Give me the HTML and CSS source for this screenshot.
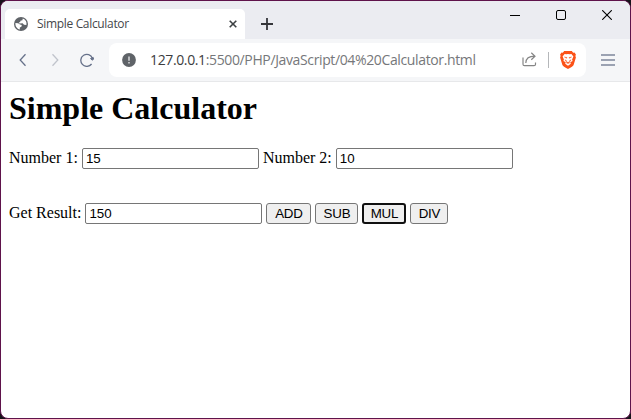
FILE: index.html
```html
<!DOCTYPE html>
<html lang="en">
<head>
<meta charset="utf-8">
<title>Simple Calculator</title>
<link rel="stylesheet" href="styles.css">
</head>
<body>
<div class="window">
  <header class="titlebar">
    <div class="tab">
      <svg class="globe" width="14" height="14" viewBox="0 0 14 14"><circle cx="7" cy="7" r="7" fill="#5f6368"/><path d="M1.4 6 4.2 6.2 6 7.6 7.8 8 7.4 9.8 5.8 10.4 5.8 12.5C3 12 1.2 9.4 1.4 6ZM8.8 1.6 8.4 3.2 6.4 3.8 6.2 5 4.8 5.4 5.4 6.4 8.6 6.2 10 7.8 12.4 8C13 5 11.6 2.4 8.8 1.6Z" fill="#fff"/></svg>
      <span class="tab-title">Simple Calculator</span>
      <svg class="tab-close" width="8" height="8" viewBox="0 0 8 8"><path d="M.7.7 7.3 7.3M7.3.7.7 7.3" stroke="#3c4043" stroke-width="1.6"/></svg>
    </div>
    <svg class="new-tab" width="12" height="12" viewBox="0 0 12 12"><path d="M6 0V12M0 6H12" stroke="#35363a" stroke-width="1.8"/></svg>
    <div class="controls">
      <svg width="10" height="10" viewBox="0 0 10 10"><path d="M0 5.5H10" stroke="#000"/></svg>
      <svg width="10" height="10" viewBox="0 0 10 10"><rect x=".5" y=".5" width="9" height="9" rx="1.5" fill="none" stroke="#000"/></svg>
      <svg width="10" height="10" viewBox="0 0 10 10"><path d="M.2.2 9.8 9.8M9.8.2.2 9.8" stroke="#000" stroke-width="1.1"/></svg>
    </div>
  </header>
  <nav class="toolbar">
    <svg class="back" width="8" height="14" viewBox="0 0 8 14"><path d="M6.5 1.2 1.2 7 6.5 12.8" fill="none" stroke="#66718a" stroke-width="1.3"/></svg>
    <svg class="forward" width="8" height="14" viewBox="0 0 8 14"><path d="M1.5 1.2 6.8 7 1.5 12.8" fill="none" stroke="#c0c4cc" stroke-width="1.3"/></svg>
    <svg class="reload" width="14" height="14" viewBox="0 0 14 14"><path d="M11.6 11A6 6 0 1 1 12.4 5.2" fill="none" stroke="#66718a" stroke-width="1.3"/><path d="M10.6 5.4 13.2 4.4 13.6 6.2 12 7.2Z" fill="#66718a" stroke="#66718a" stroke-linejoin="round"/></svg>
    <div class="address">
      <svg class="info" width="14" height="14" viewBox="0 0 14 14"><circle cx="7" cy="7" r="6.9" fill="#5f6368"/><path d="M7 3.6V7.8M7 8.9V10.4" stroke="#d8dadc" stroke-width="1.5"/></svg>
      <span class="url"><span class="host">127.0.0.1</span>:5500/PHP/JavaScript/04%20Calculator.html</span>
      <svg class="share" width="15" height="15" viewBox="0 0 15 15" fill="none" stroke="#858585" stroke-width="1.2"><path d="M1 5.5V12.2Q1 13.7 2.5 13.7H12Q13.5 13.7 13.5 12.2V10.5M3.8 11Q4 4.2 12.7 4.2M9.3.7 13 4.2 9.3 7.8"/></svg>
      <span class="divider"></span>
      <svg class="shield" width="16" height="18" viewBox="0 0 16 18"><path d="M4.2 0H11.8L13.2 1.7 14.5 1.6 15.9 3.5 15.4 5 15.9 6.4 13.6 14Q13.1 15.3 8 18 2.9 15.3 2.4 14L.1 6.4.6 5 .1 3.5 1.5 1.6 2.8 1.7Z" fill="#fb5218"/><path d="M4.6 3 6.4 3.3 8 2.9 9.6 3.3 11.4 3 13.4 5.6 12.1 8.4 12.6 10 10.3 11.3 10.8 12.8 8 14.8 5.2 12.8 5.7 11.3 3.4 10 3.9 8.4 2.6 5.6Z" fill="#fff"/><path d="M4.4 6 7 6.5 6.7 7.3ZM11.6 6 9 6.5 9.3 7.3ZM5 8.7 7 10.2 6 10.6ZM11 8.7 9 10.2 10 10.6ZM6.2 11.7 8 11 9.8 11.7 8 12.6Z" fill="#fb5218" stroke="#fb5218" stroke-width=".4"/></svg>
    </div>
    <svg class="menu" width="14" height="12" viewBox="0 0 14 12"><path d="M0 1H14M0 6H14M0 11H14" stroke="#7d879b" stroke-width="1.3"/></svg>
  </nav>
  <main class="page">
    <h1>Simple Calculator</h1>
    <div class="row">
      <label for="n1">Number 1:</label><input id="n1" type="text" value="15">
      <label for="n2">Number 2:</label><input id="n2" type="text" value="10">
    </div>
    <div class="row result">
      <label for="res">Get Result:</label><input id="res" type="text" value="150">
      <button class="add">ADD</button><button class="sub">SUB</button><button class="mul active">MUL</button><button class="div">DIV</button>
    </div>
  </main>
</div>
</body>
</html>
```
FILE: styles.css
```css
* { box-sizing: border-box; }
html { background: #17131a; }
body { margin: 0; overflow: hidden; }
svg { display: block; flex: none; }

.window {
  width: 631px;
  height: 419px;
  border: 1px solid #5f134b;
  border-radius: 8px;
  overflow: hidden;
  background: #fff;
}

.titlebar {
  display: flex;
  height: 38px;
  padding: 8px 0 0 4px;
  background: #ebecf1;
}
.tab {
  display: flex;
  align-items: center;
  width: 240px;
  height: 30px;
  padding: 0 8px 0 9px;
  border-radius: 5px 5px 0 0;
  background: #fff;
}
.tab-title {
  flex: 1;
  margin-left: 9px;
  font: 12px/16px "Open Sans", sans-serif;
  letter-spacing: -0.33px;
  color: #45474a;
  white-space: nowrap;
}
.new-tab { margin: 9px 0 0 16px; }
.controls {
  display: flex;
  gap: 36px;
  margin: 1px 18px 0 auto;
}

.toolbar {
  display: flex;
  align-items: center;
  height: 43px;
  padding: 0 15px 1px 18px;
  border-bottom: 1px solid #e7e8ea;
  background: #f5f6f8;
}
.forward { margin-left: 24px; }
.reload { margin-left: 21px; }
.address {
  display: flex;
  align-items: center;
  width: 477px;
  height: 34px;
  margin-left: 15px;
  padding: 0 10px 0 13px;
  border-radius: 8px;
  background: #fff;
}
.url {
  margin-left: 14px;
  font: 14px/20px "Open Sans", sans-serif;
  letter-spacing: -0.37px;
  color: #76777a;
  white-space: nowrap;
}
.host { color: #3c3d40; }
.share { margin-left: auto; }
.divider {
  width: 1px;
  height: 16px;
  margin: 0 11px;
  background: #b5b7ba;
}
.menu { margin-left: auto; }

.page {
  padding: 8px;
  font: 16px/18px "Liberation Serif", serif;
  color: #000;
}
h1 {
  margin: 0 0 21px;
  font-size: 32px;
  line-height: 37px;
}
.row {
  display: flex;
  align-items: center;
  height: 21px;
}
.row label { margin-right: 4px; padding-bottom: 2px; white-space: nowrap; }
.row input + label { margin-left: 4px; }
.result { margin-top: 34px; }
input {
  width: 177px;
  height: 21px;
  padding: 1px 3px;
  border: 1px solid #767676;
  border-radius: 2px;
  font: 13.333px/15px "Liberation Sans", sans-serif;
  background: #fff;
}
button {
  height: 21px;
  margin-left: 4px;
  padding: 0;
  border: 1px solid #767676;
  border-radius: 3px;
  font: 13.333px/15px "Liberation Sans", sans-serif;
  letter-spacing: -0.2px;
  color: #000;
  background: #efefef;
}
.add { width: 45px; }
.sub { width: 43px; }
.mul { width: 44px; }
.div { width: 38px; }
.active { border: 2px solid #101010; }
```
